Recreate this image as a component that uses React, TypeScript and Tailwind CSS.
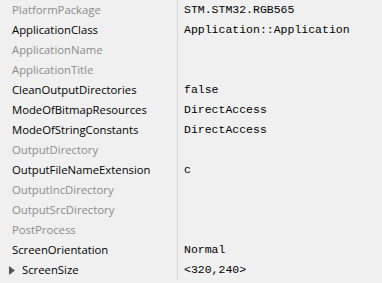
const rows: { name: string; value: string; set: boolean; expand?: boolean }[] = [
  { name: "PlatformPackage", value: "STM.STM32.RGB565", set: false },
  { name: "ApplicationClass", value: "Application::Application", set: true },
  { name: "ApplicationName", value: "", set: false },
  { name: "ApplicationTitle", value: "", set: false },
  { name: "CleanOutputDirectories", value: "false", set: true },
  { name: "ModeOfBitmapResources", value: "DirectAccess", set: true },
  { name: "ModeOfStringConstants", value: "DirectAccess", set: true },
  { name: "OutputDirectory", value: "", set: false },
  { name: "OutputFileNameExtension", value: "c", set: true },
  { name: "OutputIncDirectory", value: "", set: false },
  { name: "OutputSrcDirectory", value: "", set: false },
  { name: "PostProcess", value: "", set: false },
  { name: "ScreenOrientation", value: "Normal", set: true },
  { name: "ScreenSize", value: "<320,240>", set: true, expand: true },
];

export default function App() {
  return (
    <div className="w-[382px] h-[283px] bg-[#f0f0f0] overflow-hidden">
      {rows.map((r) => (
        <div key={r.name} className="flex h-[20px] items-center">
          <div
            className={`w-[178px] h-full flex items-center border-r border-[#d8d8d8] text-[11.3px] ${
              r.set ? "text-black" : "text-[#8c8c8c]"
            }`}
            style={{ fontFamily: '"Open Sans", sans-serif' }}
          >
            {r.expand ? (
              <>
                <svg width="6" height="9" viewBox="0 0 6 9" className="ml-[9px] mr-[7px]">
                  <path d="M0 0 L6 4.5 L0 9 Z" fill="#555" />
                </svg>
                <span>{r.name}</span>
              </>
            ) : (
              <span className="pl-[12px]">{r.name}</span>
            )}
          </div>
          <div
            className="pl-[6px] text-[11.5px] text-black"
            style={{ fontFamily: '"Liberation Mono", monospace' }}
          >
            {r.value}
          </div>
        </div>
      ))}
    </div>
  );
}
